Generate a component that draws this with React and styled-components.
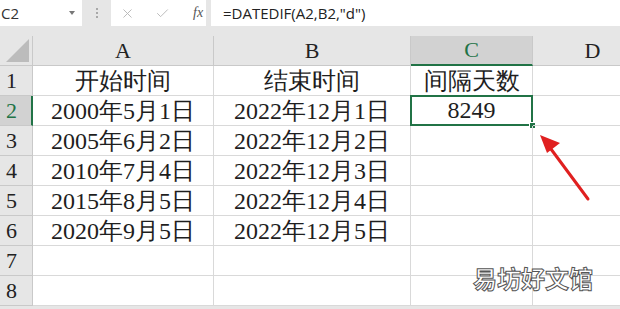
import styled, { createGlobalStyle } from "styled-components"
import { X, Check } from "lucide-react"

const Global = createGlobalStyle`
  html, body {
    margin: 0;
    padding: 0;
    background: #ffffff;
    overflow: hidden;
  }
`

const Page = styled.div`
  position: relative;
  width: 620px;
  height: 309px;
  overflow: hidden;
  background: #e6e6e6;
`

const FormulaBar = styled.div`
  display: flex;
  align-items: flex-start;
  height: 36px;
  background: #e6e6e6;
`

const NameBox = styled.div`
  display: flex;
  align-items: center;
  justify-content: space-between;
  width: 82px;
  height: 26px;
  background: #fff;
  padding: 0 7px 0 1px;
  box-sizing: border-box;
  font-family: "Open Sans", "Noto Sans", sans-serif;
  font-size: 15px;
  color: #333;
`

const Caret = styled.span`
  width: 0;
  height: 0;
  border-left: 3px solid transparent;
  border-right: 3px solid transparent;
  border-top: 4px solid #777;
`

const Grip = styled.div`
  display: flex;
  flex-direction: column;
  gap: 2px;
  width: 29px;
  align-items: center;
  padding-top: 8px;
  & span {
    width: 2px;
    height: 2px;
    background: #a8a8a8;
  }
`

const IconBox = styled.div`
  display: flex;
  align-items: center;
  width: 95px;
  height: 26px;
  background: #fff;
  padding-left: 9px;
  box-sizing: border-box;
  gap: 20px;
  color: #b8b8b8;
`

const Fx = styled.span`
  font-family: "Liberation Serif", serif;
  font-style: italic;
  font-size: 14px;
  color: #555;
  margin-left: 3px;
`

const Input = styled.div`
  flex: 1;
  height: 26px;
  margin-left: 5px;
  background: #fff;
  padding-left: 12px;
  display: flex;
  align-items: center;
  font-family: "Open Sans", "Noto Sans", sans-serif;
  font-size: 15px;
  color: #222;
`

const Sheet = styled.div`
  display: grid;
  grid-template-columns: 33px 181px 197px 122px 120px;
  grid-auto-rows: 30px;
  background: #fff;
`

const Head = styled.div`
  position: relative;
  display: flex;
  align-items: center;
  justify-content: ${p => (p.$row ? "flex-start" : "center")};
  padding-left: ${p => (p.$row ? "6px" : "0")};
  box-sizing: border-box;
  background: ${p => (p.$active ? "#d2d2d2" : "#e6e6e6")};
  color: ${p => (p.$active ? "#217346" : "#222")};
  border-right: ${p => (p.$row && p.$active ? "2px solid #217346" : "1px solid #c9c9c9")};
  border-bottom: ${p => (!p.$row && p.$active ? "2px solid #217346" : "1px solid #c9c9c9")};
  font-family: "Liberation Serif", serif;
  font-size: 22px;
`

const Corner = styled.div`
  display: flex;
  align-items: flex-end;
  justify-content: flex-end;
  padding: 0 3px 3px 0;
  box-sizing: border-box;
  background: #e6e6e6;
  border-right: 1px solid #c9c9c9;
  border-bottom: 1px solid #c9c9c9;
  &::after {
    content: "";
    width: 0;
    height: 0;
    border-left: 23px solid transparent;
    border-bottom: 23px solid #bcbcbc;
  }
`

const Cell = styled.div`
  position: relative;
  display: flex;
  align-items: center;
  justify-content: center;
  box-sizing: border-box;
  border-right: 1px solid #d9d9d9;
  border-bottom: 1px solid #d9d9d9;
  font-family: "Liberation Serif", serif;
  font-size: 24px;
  color: #1e1e1e;
  white-space: nowrap;
  ${p =>
    p.$selected &&
    `
    &::before {
      content: "";
      position: absolute;
      left: -1px;
      top: -1px;
      right: -1px;
      bottom: -1px;
      border: 2px solid #217346;
    }
    &::after {
      content: "";
      position: absolute;
      right: -4px;
      bottom: -4px;
      width: 5px;
      height: 5px;
      background: #217346;
      border: 1px solid #fff;
    }
  `}
`

const Arrow = styled.svg`
  position: absolute;
  left: 530px;
  top: 125px;
`

const Watermark = styled.div`
  position: absolute;
  left: 473px;
  top: 260px;
  font-family: "Noto Sans CJK SC", sans-serif;
  font-size: 24px;
  font-weight: 700;
  color: #fff;
  -webkit-text-stroke: 1px #555;
`

const cols = ["A", "B", "C", "D"]
const rows = [
  ["开始时间", "结束时间", "间隔天数", ""],
  ["2000年5月1日", "2022年12月1日", "8249", ""],
  ["2005年6月2日", "2022年12月2日", "", ""],
  ["2010年7月4日", "2022年12月3日", "", ""],
  ["2015年8月5日", "2022年12月4日", "", ""],
  ["2020年9月5日", "2022年12月5日", "", ""],
  ["", "", "", ""],
  ["", "", "", ""],
]

export default function App() {
  return (
    <Page>
      <Global />
      <FormulaBar>
        <NameBox>
          C2
          <Caret />
        </NameBox>
        <Grip>
          <span />
          <span />
          <span />
        </Grip>
        <IconBox>
          <X size={15} strokeWidth={1.5} />
          <Check size={15} strokeWidth={1.5} />
          <Fx>fx</Fx>
        </IconBox>
        <Input>=DATEDIF(A2,B2,"d")</Input>
      </FormulaBar>
      <Sheet>
        <Corner />
        {cols.map(c => (
          <Head key={c} $active={c === "C"}>
            {c}
          </Head>
        ))}
        {rows.map((r, i) => [
          <Head key={"h" + i} $row $active={i === 1}>
            {i + 1}
          </Head>,
          ...r.map((v, j) => (
            <Cell key={i + "-" + j} $selected={i === 1 && j === 2}>
              {v}
            </Cell>
          )),
        ])}
      </Sheet>
      <Arrow width="70" height="85" viewBox="0 0 70 85">
        <line x1="58" y1="74" x2="18" y2="20" stroke="#e02020" strokeWidth="3" strokeLinecap="round" />
        <polygon points="10,10 30,18 17,28" fill="#e02020" />
      </Arrow>
      <Watermark>易坊好文馆</Watermark>
    </Page>
  )
}
